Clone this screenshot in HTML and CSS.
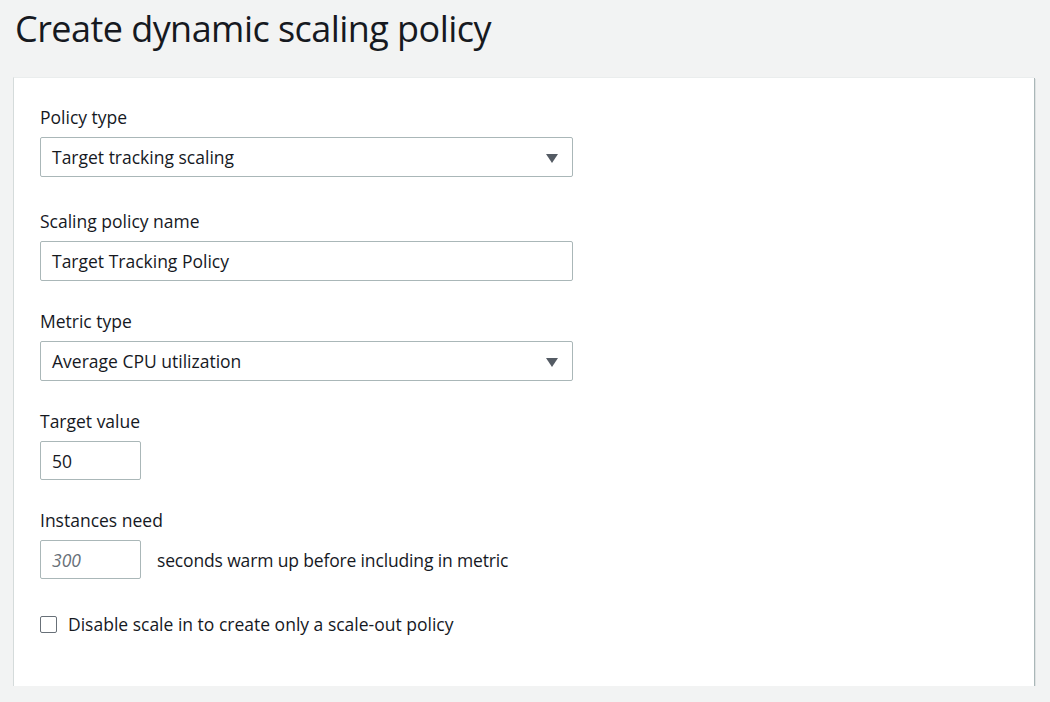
FILE: index.html
```html
<!DOCTYPE html>
<html>
<head>
<meta charset="utf-8">
<link rel="stylesheet" href="styles.css">
</head>
<body>
<h1 class="title">Create dynamic scaling policy</h1>
<div class="panel">
  <div class="field first">
    <div class="label">Policy type</div>
    <div class="control select wide">
      <span>Target tracking scaling</span>
      <svg class="caret" width="12" height="10" viewBox="0 0 12 10"><path d="M0 1 H12 L6 10 Z" fill="#545b64"/></svg>
    </div>
  </div>
  <div class="field">
    <div class="label">Scaling policy name</div>
    <div class="control wide"><span>Target Tracking Policy</span></div>
  </div>
  <div class="field">
    <div class="label">Metric type</div>
    <div class="control select wide">
      <span>Average CPU utilization</span>
      <svg class="caret" width="12" height="10" viewBox="0 0 12 10"><path d="M0 1 H12 L6 10 Z" fill="#545b64"/></svg>
    </div>
  </div>
  <div class="field">
    <div class="label">Target value</div>
    <div class="control small"><span>50</span></div>
  </div>
  <div class="field">
    <div class="label">Instances need</div>
    <div class="row">
      <div class="control small"><span class="placeholder">300</span></div>
      <span class="suffix">seconds warm up before including in metric</span>
    </div>
  </div>
  <div class="check-row">
    <span class="checkbox"></span>
    <span>Disable scale in to create only a scale-out policy</span>
  </div>
</div>
</body>
</html>
```
FILE: styles.css
```css
html, body {
  margin: 0;
  padding: 0;
  background: #f2f3f3;
  font-family: "Open Sans", "Noto Sans", sans-serif;
  color: #16191f;
}
.title {
  margin: 0;
  padding: 7px 0 0 15px;
  height: 77px;
  box-sizing: border-box;
  font-size: 36px;
  font-weight: 400;
  letter-spacing: -0.55px;
  line-height: 44px;
}
.panel {
  margin-left: 13px;
  width: 1021px;
  height: 609px;
  box-sizing: border-box;
  background: #fff;
  border-top: 1px solid #eaeded;
  border-left: 1px solid #d5dbdb;
  box-shadow: 1px 1px 0 #aab7b8, 2px 2px 0 rgba(0,28,36,0.08);
  padding: 27px 0 0 26px;
}
.field {
  margin-bottom: 28px;
}
.field.first {
  margin-bottom: 32px;
}
.label {
  font-size: 17.5px;
  line-height: 24px;
  margin-bottom: 8px;
}
.control {
  height: 40px;
  box-sizing: border-box;
  border: 1px solid #aab7b8;
  border-radius: 2px;
  display: flex;
  align-items: center;
  padding: 0 12px 0 11px;
  font-size: 17.5px;
}
.wide { width: 533px; }
.small { width: 101px; height: 39px; }
.select { justify-content: space-between; padding-right: 14px; }
.caret { margin-top: 1px; }
.placeholder { font-style: italic; color: #687078; }
.row {
  display: flex;
  align-items: center;
  gap: 16px;
}
.suffix { font-size: 17.5px; letter-spacing: -0.15px; }
.check-row {
  display: flex;
  align-items: center;
  gap: 11px;
  margin-top: 33px;
  font-size: 17.5px;
  line-height: 24px;
}
.checkbox {
  width: 17px;
  height: 17px;
  box-sizing: border-box;
  border: 1px solid #687078;
  border-radius: 2px;
  background: #fff;
}
```
